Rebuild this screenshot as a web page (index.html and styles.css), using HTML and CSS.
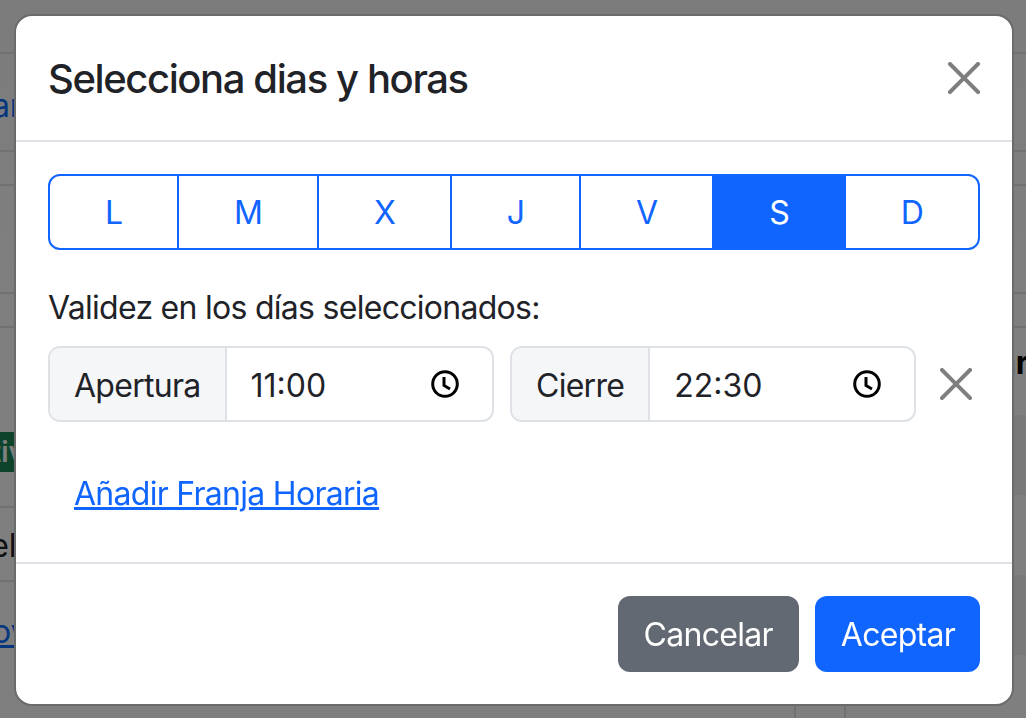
FILE: index.html
```html
<!DOCTYPE html>
<html lang="es">
<head>
    <meta charset="UTF-8">
    <title>Selecciona dias y horas</title>
    <link rel="stylesheet" href="styles.css">
</head>
<body>
<div class="page">
    <div class="row row-a"></div>
    <div class="row row-b"><a class="link-back">Guardar</a></div>
    <div class="row row-c"></div>
    <div class="row row-d"></div>
    <div class="row row-e"></div>
    <div class="lower">
        <div class="col-left">
            <div class="cell cell-badge"><span class="badge">Activa</span></div>
            <div class="cell cell-name">Hotel</div>
            <div class="cell cell-link"><a class="link-back">Mover</a></div>
        </div>
        <div class="col-right">
            <h5 class="side-title">Horarios de</h5>
            <div class="stripe stripe-dark"></div>
            <div class="stripe"></div>
            <div class="stripe stripe-dark"></div>
            <div class="stripe stripe-last"><span></span><span>Jueves</span></div>
        </div>
    </div>
</div>

<div class="backdrop"></div>

<div class="modal">
    <div class="modal-header">
        <h4 class="modal-title">Selecciona dias y horas</h4>
        <button class="close close-big" type="button" aria-label="Cerrar">
            <svg viewBox="0 0 16 16"><path d="M.293.293a1 1 0 011.414 0L8 6.586 14.293.293a1 1 0 111.414 1.414L9.414 8l6.293 6.293a1 1 0 01-1.414 1.414L8 9.414l-6.293 6.293a1 1 0 01-1.414-1.414L6.586 8 .293 1.707a1 1 0 010-1.414z"/></svg>
        </button>
    </div>
    <div class="modal-body">
        <div class="days">
            <button class="day" type="button">L</button>
            <button class="day" type="button">M</button>
            <button class="day" type="button">X</button>
            <button class="day" type="button">J</button>
            <button class="day" type="button">V</button>
            <button class="day on" type="button">S</button>
            <button class="day" type="button">D</button>
        </div>
        <p class="label">Validez en los días seleccionados:</p>
        <div class="slot">
            <div class="group group-open">
                <span class="addon">Apertura</span>
                <span class="time">11:00
                    <svg class="clock" viewBox="0 0 28 28"><circle cx="14" cy="14" r="12.300"/><path d="M13 7v8.500l6 3.500"/></svg>
                </span>
            </div>
            <div class="group group-close">
                <span class="addon">Cierre</span>
                <span class="time">22:30
                    <svg class="clock" viewBox="0 0 28 28"><circle cx="14" cy="14" r="12.300"/><path d="M13 7v8.500l6 3.500"/></svg>
                </span>
            </div>
            <button class="close close-slot" type="button" aria-label="Quitar">
                <svg viewBox="0 0 16 16"><path d="M.293.293a1 1 0 011.414 0L8 6.586 14.293.293a1 1 0 111.414 1.414L9.414 8l6.293 6.293a1 1 0 01-1.414 1.414L8 9.414l-6.293 6.293a1 1 0 01-1.414-1.414L6.586 8 .293 1.707a1 1 0 010-1.414z"/></svg>
            </button>
        </div>
        <a class="add" href="#">Añadir Franja Horaria</a>
    </div>
    <div class="modal-footer">
        <button class="btn btn-grey" type="button">Cancelar</button>
        <button class="btn btn-blue" type="button">Aceptar</button>
    </div>
</div>
</body>
</html>
```

FILE: styles.css
```css
*{
    margin:0;
    padding:0;
    box-sizing: border-box;
}
html,body{
    height: 100%;
    overflow: hidden;
}
body{
    background: #fff;
    color: #1f2328;
    font-family: "Inter","Liberation Sans",sans-serif;
    font-size: 32px;
    line-height: 48px;
}
button{
    font: inherit;
    letter-spacing: inherit;
}

/* page behind the modal */
.page{
    height: 718px;
    overflow: hidden;
    background: linear-gradient(#f6f8f6,#fff 320px);
}
.row{
    border-bottom: 2px solid #dee2e6;
    overflow: hidden;
}
.row-a{ height: 54px; }
.row-b{ height: 98px; padding-top: 28px; }
.row-c{ height: 34px; }
.row-d{ height: 108px; }
.row-e{ height: 34px; }
.link-back{
    color: #0d6efd;
    display: block;
    margin-left: -100px;
    white-space: nowrap;
}
.lower{
    display: flex;
}
.col-left{
    flex: none;
    width: 780px;
}
.cell{
    border-bottom: 2px solid #dee2e6;
    overflow: hidden;
}
.cell-badge{
    height: 180px;
    padding-top: 104px;
}
.badge{
    display: block;
    width: 120px;
    margin-left: -60px;
    height: 40px;
    background: #198754;
    color: #fff;
    font-size: 28px;
    font-weight: 600;
    line-height: 40px;
    padding-left: 15px;
}
.cell-name{
    height: 74px;
    padding-top: 14px;
    margin-left: -63px;
}
.cell-link{
    border: 0;
    padding-top: 26px;
}
.cell-link .link-back{
    margin-left: -37px;
    text-decoration: underline;
}
.col-right{
    flex: 1;
    min-width: 0;
    padding-left: 14px;
}
.side-title{
    height: 87px;
    padding: 11px 0 0 147px;
    font-size: 32px;
    font-weight: 700;
    color: #000;
    white-space: nowrap;
    overflow: hidden;
}
.stripe{
    height: 80px;
}
.stripe-dark{
    background: #f2f2f2;
}
.stripe-last{
    display: grid;
    grid-template-columns: 50px 1fr;
}
.stripe-last span{
    border-left: 2px solid #dee2e6;
    padding: 16px 0 0 16px;
}

.backdrop{
    position: fixed;
    inset: 0;
    background: rgba(0,0,0,.5);
}

/* modal */
.modal{
    position: absolute;
    top: 14px;
    left: 14px;
    width: 1000px;
    height: 692px;
    background: #fff;
    border: 2px solid #6a6b6b;
    border-radius: 18px;
    display: flex;
    flex-direction: column;
    letter-spacing: -.72px;
}
.modal-header{
    height: 126px;
    flex: none;
    border-bottom: 2px solid #dee2e6;
    padding: 0 32px;
    display: flex;
    align-items: center;
    justify-content: space-between;
}
.modal-title{
    font-size: 40px;
    font-weight: 500;
    line-height: 48px;
    margin-top: 2px;
    letter-spacing: -1.4px;
}
.close{
    background: none;
    border: 0;
    display: block;
}
.close svg{
    display: block;
    width: 32px;
    height: 32px;
    fill: #000;
    opacity: .5;
}
.modal-body{
    flex: 1;
    padding: 32px 32px 0;
}
.days{
    display: flex;
    height: 76px;
}
.day{
    flex: 1 1 auto;
    background: #fff;
    border: 2px solid #0f65fe;
    color: #0f65fe;
    margin-left: -2px;
    padding: 2px 24px 0;
}
.day:first-child{
    margin-left: 0;
    border-radius: 12px 0 0 12px;
}
.day:last-child{
    border-radius: 0 12px 12px 0;
}
.day.on{
    background: #0f65fe;
    color: #fff;
}
.label{
    margin: 34px 0 14px;
}
.slot{
    display: flex;
    align-items: center;
}
.group{
    display: flex;
    height: 76px;
    border: 2px solid #dee2e6;
    border-radius: 12px;
    overflow: hidden;
}
.group-open{
    width: 446px;
}
.group-close{
    width: 406px;
    margin-left: 16px;
}
.addon{
    background: #f5f6f8;
    border-right: 2px solid #dee2e6;
    padding: 14px 24px 10px;
}
.time{
    flex: 1;
    display: flex;
    align-items: center;
    justify-content: space-between;
    padding: 3px 33px 0 24px;
    letter-spacing: 0;
}
.clock{
    width: 28px;
    height: 28px;
    margin-top: -3px;
    fill: none;
    stroke: #000;
    stroke-width: 3;
}
.close-slot{
    margin-left: 24px;
}
.add{
    display: inline-block;
    color: #0f65fe;
    margin: 48px 0 0 26px;
}

.modal-footer{
    height: 142px;
    flex: none;
    border-top: 2px solid #dee2e6;
    padding: 32px;
    display: flex;
    justify-content: flex-end;
    gap: 16px;
}
.btn{
    height: 76px;
    border: 0;
    border-radius: 12px;
    color: #fff;
    padding: 2px 26px 0;
}
.btn-grey{
    background: #626973;
}
.btn-blue{
    background: #0f65fe;
    padding: 2px 25px 0 26px;
}
```
